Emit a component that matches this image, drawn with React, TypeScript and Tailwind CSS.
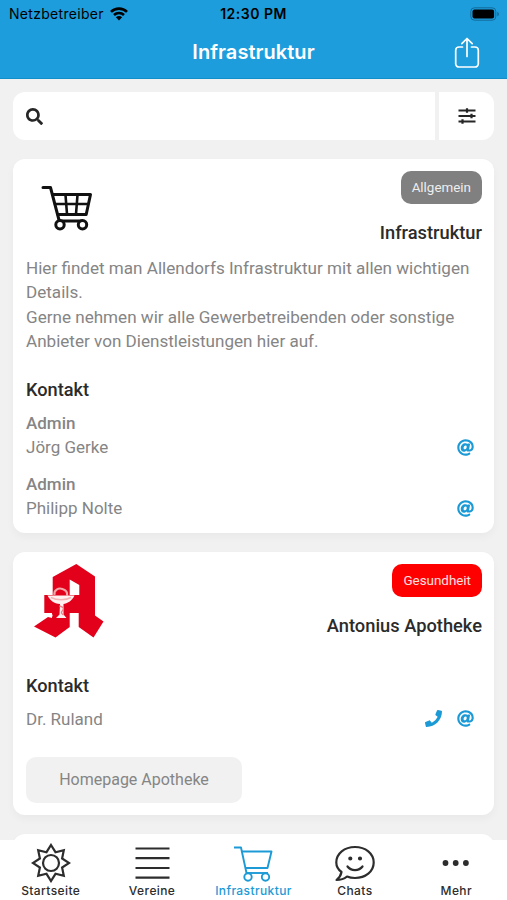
import type { ReactNode } from "react";
import { FaAt, FaPhone, FaSearch } from "react-icons/fa";

type Contact = {
  role?: string;
  name: string;
  phone?: boolean;
};

const ADMINS: Contact[] = [
  { role: "Admin", name: "Jörg Gerke" },
  { role: "Admin", name: "Philipp Nolte" },
];

const PHARMACY: Contact[] = [{ name: "Dr. Ruland", phone: true }];

function StatusBar() {
  return (
    <div className="grid h-[27px] grid-cols-3 items-center pl-[9px] pr-[7px] text-black">
      <div className="flex items-center gap-[6px]">
        <span className="text-[14px] leading-[27px] tracking-[0.3px]">Netzbetreiber</span>
        <svg width="18" height="14" viewBox="0 0 18 14" fill="none" stroke="currentColor" strokeWidth="2.6">
          <path d="M1 4.9a11.3 11.3 0 0 1 16 0" />
          <path d="M4 8a7.1 7.1 0 0 1 10 0" />
          <path d="M9 13.4 5.9 10.3a4.4 4.4 0 0 1 6.2 0z" fill="currentColor" stroke="none" />
        </svg>
      </div>
      <span className="pr-0.5 text-center text-[14px] font-semibold leading-[27px] tracking-[0.5px]">12:30 PM</span>
      <svg className="justify-self-end" width="30" height="14" viewBox="0 0 30 14">
        <rect x="0.8" y="0.8" width="25" height="12.4" rx="3.6" fill="none" stroke="#136a9a" />
        <rect x="2.5" y="2.5" width="21.6" height="9" rx="2" fill="#000" />
        <path d="M27.3 4.7v4.6c1-.4 1.6-1.3 1.6-2.3s-.6-1.9-1.6-2.3z" fill="#136a9a" />
      </svg>
    </div>
  );
}

function Header() {
  return (
    <header className="h-[79px] shrink-0 border-b border-[#128fcb] bg-[#1d9ddc] font-['Inter',sans-serif]">
      <StatusBar />
      <div className="grid h-[51px] grid-cols-[60px_1fr_60px] items-center">
        <h1 className="col-start-2 text-center text-[20px] font-semibold leading-[51px] tracking-[0.05px] text-white">Infrastruktur</h1>
        <button className="ml-[7px] justify-self-start">
          <svg width="26" height="32" viewBox="0 0 26 32" fill="none" stroke="white" strokeWidth="1.7" strokeLinecap="round" strokeLinejoin="round">
            <path d="M8.5 10H5a3.3 3.3 0 0 0-3.3 3.3v13.4A3.3 3.3 0 0 0 5 30h16a3.3 3.3 0 0 0 3.3-3.3V13.3A3.3 3.3 0 0 0 21 10h-3.5" />
            <path d="M13 19.500V1.700M7.800 6.700 13 1.500l5.200 5.200" />
          </svg>
        </button>
      </div>
    </header>
  );
}

function SearchBar() {
  return (
    <div className="flex h-12 shrink-0 gap-1">
      <div className="flex flex-1 items-center rounded-l-xl bg-white pl-[13px]">
        <FaSearch size={17} className="text-[#262626]" />
      </div>
      <button className="flex w-[55px] items-center justify-center rounded-r-xl bg-white">
        <svg width="18" height="16" viewBox="0 0 18 16" stroke="#262626" strokeWidth="1.8">
          <path d="M.5 2.500h17M.5 8h17M.5 13.500h17" />
          <path d="M9 .3v4.400M13.500 5.800v4.400M4.500 11.300v4.400" strokeWidth="2.2" />
        </svg>
      </button>
    </div>
  );
}

function CartPicture() {
  return (
    <svg width="52" height="46" viewBox="0 0 52 46" fill="none" stroke="#111" strokeWidth="3" strokeLinecap="round" strokeLinejoin="round">
      <path d="M2 2.500h7.500L18 35" />
      <path d="M12 9.500h37.500l-4.300 20H17" />
      <path d="M14 19h33M24.500 10l1.500 19M36.500 10 35 29" strokeWidth="2.6" />
      <path d="M19 36h22" />
      <circle cx="19" cy="39.700" r="4.200" fill="white" />
      <circle cx="41.500" cy="39.700" r="4.200" fill="white" />
    </svg>
  );
}

function PharmacyLogo() {
  return (
    <svg width="70" height="74" viewBox="0 0 70 74">
      <path
        fill="#e2001a"
        d="M42.300 0 61 12.500V51.500L69.500 57.500 59.500 73.500 44.700 63V49H35.700V63L21.500 73.500 0 62.500 14 53 18 54V49H10.300V31H18.700V13z"
      />
      <path d="M35.700 15.500V31H45.300V21z" fill="white" />
      {/* bowl of Hygieia */}
      <path d="M20.500 31c-1-5 4-7.500 8-6 4 1.300 5 4 4.500 6.500" fill="none" strokeWidth="2.200" stroke="#f3a5a8" />
      <path d="M13.500 31.500H40.500C38 37 33 39.500 29.500 40L29.500 50.500 32.500 54H22l3.500-3.500L26 40c-6-.5-10-3.500-12.500-8.500z" fill="#fff1f0" />
      <path d="M17 33.500c6 3 15 3 20 0" fill="none" stroke="#f4b4b5" strokeWidth="1.500" />
      <path d="M25.500 42c4 1 5 2.500 3 4.500s-1 3 1 4.500" fill="none" stroke="#ee8088" strokeWidth="1.400" />
      <path d="M13 51.500h5.500" stroke="white" strokeWidth="2" />
    </svg>
  );
}

function Card({ children }: { children?: ReactNode }) {
  return <section className="rounded-xl bg-white pl-[13px] pr-3 shadow-[0_4px_8px_rgba(0,0,0,0.035)]">{children}</section>;
}

function CardHead({ picture, tag, tagClass, title }: { picture: ReactNode; tag: string; tagClass: string; title: string }) {
  return (
    <div className="flex justify-between">
      {picture}
      <div className="flex flex-col items-end pt-3">
        <span className={`h-[33px] rounded-[10px] px-[11px] text-[13.400px] leading-[33px] ${tagClass}`}>{tag}</span>
        <h2 className="mt-[17px] h-[23px] text-[18.300px] font-medium leading-[23px] text-[#2b2b2b]">{title}</h2>
      </div>
    </div>
  );
}

function ContactRow({ role, name, phone }: Contact) {
  return (
    <div className="flex items-end justify-between pr-2">
      <div className="text-[17px] leading-[24.500px] text-[#858585]">
        {role && <div className="font-medium">{role}</div>}
        <div>{name}</div>
      </div>
      <div className="flex h-[25px] items-center gap-[15px] text-[#1c9ad6]">
        {phone && <FaPhone size={17} />}
        <FaAt size={17} />
      </div>
    </div>
  );
}

const TABS = [
  {
    label: "Startseite",
    icon: (
      <svg width="40" height="40" viewBox="0 0 40 40" fill="none" stroke="currentColor" strokeWidth="2.200">
        <path d="m20 2 4.500 7.200 8.300-2-1.700 8.300 7 4.500-7 4.500 1.700 8.300-8.300-2L20 38l-4.500-7.200-8.300 2 1.700-8.300-7-4.500 7-4.500-1.700-8.300 8.300 2z" />
        <circle cx="20" cy="20" r="8" />
      </svg>
    ),
  },
  {
    label: "Vereine",
    icon: (
      <svg width="40" height="40" viewBox="0 0 40 40" stroke="currentColor" strokeWidth="2.200">
        <path d="M3.500 5.500h34M3.500 15.200h34M3.500 25h34M3.500 34.700h34" />
      </svg>
    ),
  },
  {
    label: "Infrastruktur",
    active: true,
    icon: (
      <svg width="40" height="40" viewBox="0 0 40 40" fill="none" stroke="currentColor" strokeWidth="1.900" strokeLinejoin="round">
        <path d="M1 4.500h7L13.500 30" />
        <path d="M8.700 8.500H38.500L34.500 25H12.300" />
        <path d="M13 30h22" />
        <circle cx="15" cy="34" r="3.700" fill="white" />
        <circle cx="32.500" cy="34" r="3.700" fill="white" />
      </svg>
    ),
  },
  {
    label: "Chats",
    icon: (
      <svg width="40" height="40" viewBox="0 0 40 40" fill="none" stroke="currentColor" strokeWidth="2.200" strokeLinecap="round" strokeLinejoin="round">
        <path d="M6.500 29C3 26.500 1.300 23.500 1.300 19.500 1.300 10.500 9.500 4 20 4s18.700 6.500 18.700 15.500S30.500 35 20 35c-3 0-5.700-.5-8-1.500C9 36 5.500 37 1.500 37 4 35 6 32 6.500 29z" />
        <path d="M12.500 23.500c3.500 4.700 11.500 4.700 15 0" />
        <circle cx="15.300" cy="15.500" r="1" fill="currentColor" />
        <circle cx="25" cy="15.500" r="1" fill="currentColor" />
      </svg>
    ),
  },
  {
    label: "Mehr",
    icon: (
      <svg width="40" height="40" viewBox="0 0 40 40" fill="currentColor">
        <circle cx="9.500" cy="20" r="2.900" />
        <circle cx="19.700" cy="20" r="2.900" />
        <circle cx="29.900" cy="20" r="2.900" />
      </svg>
    ),
  },
];

function TabBar() {
  return (
    <nav className="grid h-[60px] shrink-0 grid-cols-5 bg-white font-['Inter',sans-serif]">
      {TABS.map((tab) => (
        <button key={tab.label} className={`flex flex-col items-center pt-[3px] ${tab.active ? "text-[#1c9ad6]" : "text-[#2d2d2d]"}`}>
          {tab.icon}
          <span className="text-[12px] font-medium leading-4 tracking-[0.400px]">{tab.label}</span>
        </button>
      ))}
    </nav>
  );
}

export default function App() {
  return (
    <div className="flex h-[900px] w-[507px] flex-col overflow-hidden bg-[#f1f1f1] font-['Roboto',sans-serif]">
      <Header />

      <main className="flex min-h-0 flex-1 flex-col overflow-hidden px-[13px] pt-[13px]">
        <SearchBar />

        <div className="mt-[19px] flex flex-col gap-[19px]">
          <Card>
            <div className="h-[374px]">
              <CardHead
                picture={<div className="pl-[15px] pt-[26px]"><CartPicture /></div>}
                tag="Allgemein"
                tagClass="bg-[#808080] text-[#eeeeee]"
                title="Infrastruktur"
              />
              <p className="mt-3 text-[17.080px] leading-[24.400px] text-[#858585]">
                Hier findet man Allendorfs Infrastruktur mit allen wichtigen Details.
                <br />
                Gerne nehmen wir alle Gewerbetreibenden oder sonstige Anbieter von Dienstleistungen hier auf.
              </p>
              <h3 className="mt-6 text-[18.200px] font-medium leading-6 text-[#2b2b2b]">Kontakt</h3>
              <div className="mt-[9px] flex flex-col gap-3">
                {ADMINS.map((c) => <ContactRow key={c.name} {...c} />)}
              </div>
            </div>
          </Card>

          <Card>
            <div className="h-[263px]">
              <CardHead
                picture={<div className="h-[97px] pl-2 pt-3"><PharmacyLogo /></div>}
                tag="Gesundheit"
                tagClass="bg-[#ff0000] text-[#ffe0e0]"
                title="Antonius Apotheke"
              />
              <h3 className="mt-[25px] text-[18.200px] font-medium leading-6 text-[#2b2b2b]">Kontakt</h3>
              <div className="mt-2">
                {PHARMACY.map((c) => <ContactRow key={c.name} {...c} />)}
              </div>
              <button className="mt-[26px] h-[46px] w-[216px] rounded-[10px] bg-[#f1f1f1] text-[16px] text-[#858585]">
                Homepage Apotheke
              </button>
            </div>
          </Card>

          <Card>
            <div className="h-24" />
          </Card>
        </div>
      </main>

      <TabBar />
    </div>
  );
}
